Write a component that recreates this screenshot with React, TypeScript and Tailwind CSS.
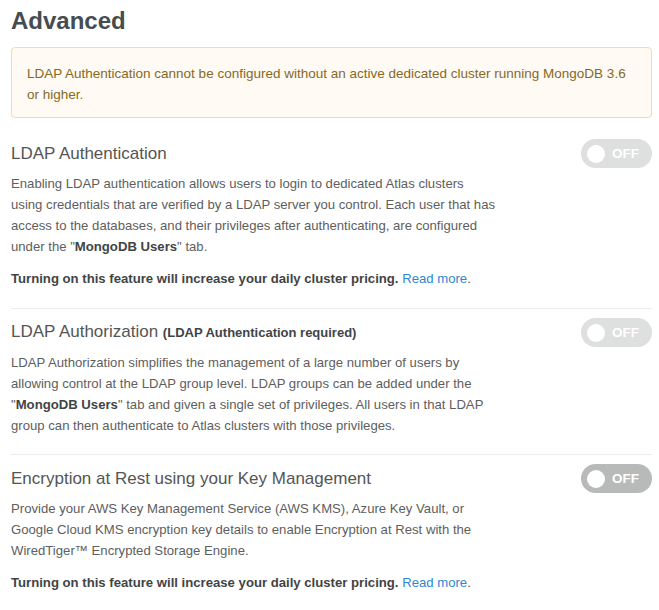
import React from "react";

function Toggle({ dark }: { dark?: boolean }) {
  return (
    <div
      className={`relative h-[29px] w-[71px] shrink-0 rounded-full ${dark ? "bg-[#b8baba]" : "bg-[#dedfdf]"}`}
    >
      <div className="absolute left-[6px] top-[5.5px] h-[18px] w-[18px] rounded-full bg-white" />
      <span className="absolute left-[31px] top-0 text-[13.5px] font-bold leading-[29px] text-white">OFF</span>
    </div>
  );
}

function Pricing() {
  return (
    <p className="mt-[11px] text-[13.15px] leading-[21px] font-bold text-[#3f4446]">
      Turning on this feature will increase your daily cluster pricing.{" "}
      <a className="font-normal text-[#2f87cf]">Read more</a>
      <span className="font-normal text-[#5c5c5c]">.</span>
    </p>
  );
}

export default function App() {
  return (
    <div
      className="w-[659px] bg-white pl-[11px] pr-[7px] pt-[7px]"
      style={{ fontFamily: '"Liberation Sans", Arial, sans-serif' }}
    >
      <h1 className="text-[24px] font-bold leading-[28px] text-[#464c4f]">Advanced</h1>

      <div className="mt-[12px] rounded-[4px] border border-[#f1dcad] bg-[#fffaf3] pl-[15px] pr-[20px] pt-[15px] pb-[12px] text-[13.5px] leading-[21px] text-[#86691f]">
        LDAP Authentication cannot be configured without an active dedicated cluster running MongoDB 3.6 or higher.
      </div>

      <section className="mt-[21px] border-b border-[#ececec] pb-[19px]">
        <div className="flex items-center justify-between">
          <h3 className="text-[17px] leading-[24px] text-[#555555]">LDAP Authentication</h3>
          <Toggle />
        </div>
        <p className="mt-[5px] w-[486px] text-[13.15px] leading-[21px] text-[#5e5e5e]">
          Enabling LDAP authentication allows users to login to dedicated Atlas clusters using credentials that are
          verified by a LDAP server you control. Each user that has access to the databases, and their privileges after
          authenticating, are configured under the "<b className="text-[#3f4446]">MongoDB Users</b>" tab.
        </p>
        <Pricing />
      </section>

      <section className="border-b border-[#ececec] pt-[9px] pb-[18px]">
        <div className="flex items-center justify-between">
          <h3 className="text-[17px] leading-[24px] text-[#555555]">
            LDAP Authorization{" "}
            <span className="text-[13px] font-bold text-[#3f4446]">(LDAP Authentication required)</span>
          </h3>
          <Toggle />
        </div>
        <p className="mt-[5px] w-[486px] text-[13.15px] leading-[21px] text-[#5e5e5e]">
          LDAP Authorization simplifies the management of a large number of users by allowing control at the LDAP group
          level. LDAP groups can be added under the "<b className="text-[#3f4446]">MongoDB Users</b>" tab and given a
          single set of privileges. All users in that LDAP group can then authenticate to Atlas clusters with those
          privileges.
        </p>
      </section>

      <section className="pt-[9px] pb-[20px]">
        <div className="flex items-center justify-between">
          <h3 className="text-[17px] leading-[24px] text-[#555555]">Encryption at Rest using your Key Management</h3>
          <Toggle dark />
        </div>
        <p className="mt-[5px] w-[486px] text-[13.15px] leading-[21px] text-[#5e5e5e]">
          Provide your AWS Key Management Service (AWS KMS), Azure Key Vault, or Google Cloud KMS encryption key
          details to enable Encryption at Rest with the WiredTiger™ Encrypted Storage Engine.
        </p>
        <Pricing />
      </section>
    </div>
  );
}
